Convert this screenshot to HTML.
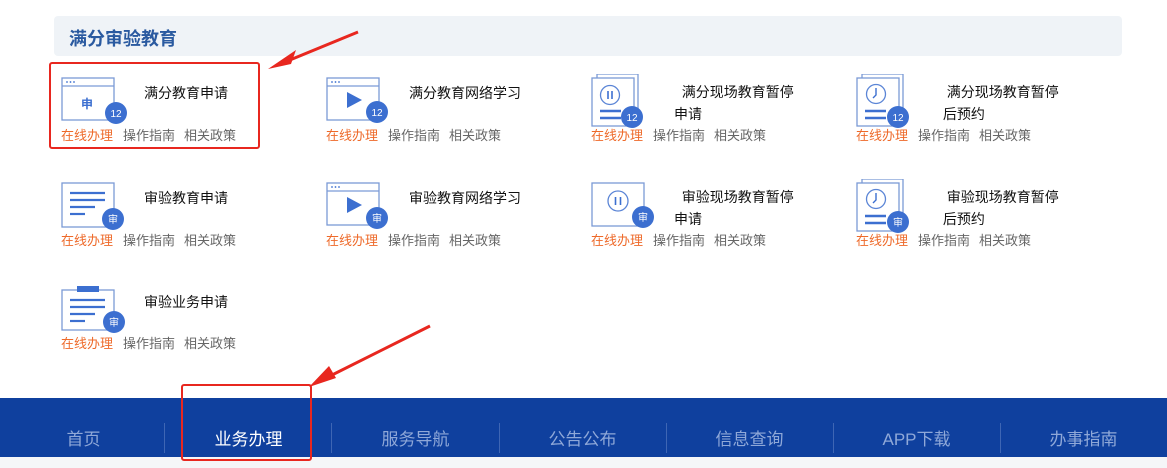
<!DOCTYPE html>
<html><head><meta charset="utf-8">
<style>
*{margin:0;padding:0;box-sizing:border-box}
body{width:1167px;height:468px;overflow:hidden;background:#fff;font-family:"Liberation Sans","Noto Sans CJK SC",sans-serif;position:relative}
.hdr{position:absolute;left:54px;top:16px;width:1068px;height:40px;background:#eff3f7;border-radius:4px}
.hdr span{position:absolute;left:15px;top:9px;font-size:18px;font-weight:bold;color:#2a5aa0}
.it{position:absolute;width:260px;height:90px}
.it svg{position:absolute;left:0;top:0}
.t{position:absolute;left:83px;top:5px;font-size:14px;color:#111;line-height:22px;width:150px}
.l{position:absolute;left:0;top:48px;font-size:13px;color:#666;white-space:nowrap}
.l b{font-weight:normal;color:#ee6a2a;margin-right:10px}
.l i{font-style:normal;margin-right:9px}
.nav{position:absolute;left:0;top:398px;width:1167px;height:59px;background:#0f409e}
.foot{position:absolute;left:0;top:457px;width:1167px;height:11px;background:#f5f6f8}
.nav div{position:absolute;top:27px;font-size:17px;color:#8fa8d8;width:167px;text-align:center}
.sep{position:absolute;top:25px;width:1px;height:30px;background:#3e66b4}
.box{position:absolute;border:2px solid #e8271f;border-radius:3px}
</style></head><body>
<div class="hdr"><span>满分审验教育</span></div>

<svg width="0" height="0" style="position:absolute">
<defs>
<g id="win"><rect x="1" y="1" width="52" height="42" fill="#fff" stroke="#7b9ad6" stroke-width="1.3"/><line x1="1" y1="9" x2="53" y2="9" stroke="#7b9ad6" stroke-width="1.3"/><circle cx="6" cy="5" r="0.9" fill="#3c6fd0"/><circle cx="9.5" cy="5" r="0.9" fill="#3c6fd0"/><circle cx="13" cy="5" r="0.9" fill="#3c6fd0"/></g>
<g id="stk"><rect x="6" y="-3" width="41" height="44" fill="#fff" stroke="#7b9ad6" stroke-width="1.3"/><rect x="1" y="1" width="42" height="48" fill="#fff" stroke="#7b9ad6" stroke-width="1.3"/><line x1="9" y1="34" x2="30" y2="34" stroke="#3c6fd0" stroke-width="2.5"/><line x1="9" y1="41" x2="30" y2="41" stroke="#3c6fd0" stroke-width="2.5"/></g>
<g id="doc"><rect x="1" y="1" width="52" height="44" fill="#fff" stroke="#7b9ad6" stroke-width="1.3"/><line x1="9" y1="11" x2="44" y2="11" stroke="#3c6fd0" stroke-width="2.2"/><line x1="9" y1="18" x2="44" y2="18" stroke="#3c6fd0" stroke-width="2.2"/><line x1="9" y1="25" x2="34" y2="25" stroke="#3c6fd0" stroke-width="2.2"/><line x1="9" y1="32" x2="24" y2="32" stroke="#3c6fd0" stroke-width="2.2"/></g>
</defs></svg>

<!-- row 1 -->
<div class="it" style="left:61px;top:77px">
<svg width="80" height="56"><use href="#win"/><text x="26" y="31" font-size="12" font-weight="bold" fill="#3c6fd0" text-anchor="middle" font-family="Noto Sans CJK SC">申</text><circle cx="55" cy="36" r="11" fill="#3c6fd0"/><text x="55" y="40" font-size="10" fill="#fff" text-anchor="middle">12</text></svg>
<div class="t">满分教育申请</div>
<div class="l"><b>在线办理</b><i>操作指南</i><i>相关政策</i></div></div>

<div class="it" style="left:326px;top:77px">
<svg width="80" height="56"><use href="#win"/><polygon points="21,15 21,31 36,23" fill="#3c6fd0"/><circle cx="51" cy="35" r="11" fill="#3c6fd0"/><text x="51" y="39" font-size="10" fill="#fff" text-anchor="middle">12</text></svg>
<div class="t">满分教育网络学习</div>
<div class="l"><b>在线办理</b><i>操作指南</i><i>相关政策</i></div></div>

<div class="it" style="left:591px;top:77px">
<svg width="80" height="56" style="top:-3px" viewBox="0 -3 80 56"><use href="#stk"/><circle cx="19" cy="18" r="9.5" fill="none" stroke="#5b85d6" stroke-width="1.3"/><line x1="17" y1="14" x2="17" y2="22" stroke="#3c6fd0" stroke-width="1.6"/><line x1="21" y1="14" x2="21" y2="22" stroke="#3c6fd0" stroke-width="1.6"/><circle cx="41" cy="40" r="11" fill="#3c6fd0"/><text x="41" y="44" font-size="10" fill="#fff" text-anchor="middle">12</text></svg>
<div class="t" style="top:4px">&nbsp;&nbsp;满分现场教育暂停<br>申请</div>
<div class="l"><b>在线办理</b><i>操作指南</i><i>相关政策</i></div></div>

<div class="it" style="left:856px;top:77px">
<svg width="80" height="56" style="top:-3px" viewBox="0 -3 80 56"><use href="#stk"/><circle cx="20" cy="17" r="9.5" fill="none" stroke="#5b85d6" stroke-width="1.3"/><polyline points="20,11 20,18 17,21" fill="none" stroke="#3c6fd0" stroke-width="1.4"/><circle cx="42" cy="40" r="11" fill="#3c6fd0"/><text x="42" y="44" font-size="10" fill="#fff" text-anchor="middle">12</text></svg>
<div class="t" style="top:4px">&nbsp;&nbsp;满分现场教育暂停<br>&nbsp;后预约</div>
<div class="l"><b>在线办理</b><i>操作指南</i><i>相关政策</i></div></div>

<!-- row 2 -->
<div class="it" style="left:61px;top:182px">
<svg width="80" height="56"><use href="#doc"/><circle cx="52" cy="37" r="11" fill="#3c6fd0"/><text x="52" y="41" font-size="10" fill="#fff" text-anchor="middle" font-family="Noto Sans CJK SC">审</text></svg>
<div class="t">审验教育申请</div>
<div class="l"><b>在线办理</b><i>操作指南</i><i>相关政策</i></div></div>

<div class="it" style="left:326px;top:182px">
<svg width="80" height="56"><use href="#win"/><polygon points="21,15 21,31 36,23" fill="#3c6fd0"/><circle cx="51" cy="36" r="11" fill="#3c6fd0"/><text x="51" y="40" font-size="10" fill="#fff" text-anchor="middle" font-family="Noto Sans CJK SC">审</text></svg>
<div class="t">审验教育网络学习</div>
<div class="l"><b>在线办理</b><i>操作指南</i><i>相关政策</i></div></div>

<div class="it" style="left:591px;top:182px">
<svg width="80" height="56"><rect x="1" y="1" width="52" height="43" fill="#fff" stroke="#7b9ad6" stroke-width="1.3"/><circle cx="27" cy="19" r="10" fill="none" stroke="#5b85d6" stroke-width="1.3"/><line x1="24.5" y1="15" x2="24.5" y2="23" stroke="#3c6fd0" stroke-width="1.6"/><line x1="29.5" y1="15" x2="29.5" y2="23" stroke="#3c6fd0" stroke-width="1.6"/><circle cx="52" cy="35" r="11" fill="#3c6fd0"/><text x="52" y="39" font-size="10" fill="#fff" text-anchor="middle" font-family="Noto Sans CJK SC">审</text></svg>
<div class="t" style="top:4px">&nbsp;&nbsp;审验现场教育暂停<br>申请</div>
<div class="l"><b>在线办理</b><i>操作指南</i><i>相关政策</i></div></div>

<div class="it" style="left:856px;top:182px">
<svg width="80" height="56" style="top:-3px" viewBox="0 -3 80 56"><use href="#stk"/><circle cx="20" cy="17" r="9.5" fill="none" stroke="#5b85d6" stroke-width="1.3"/><polyline points="20,11 20,18 17,21" fill="none" stroke="#3c6fd0" stroke-width="1.4"/><circle cx="42" cy="40" r="11" fill="#3c6fd0"/><text x="42" y="44" font-size="10" fill="#fff" text-anchor="middle" font-family="Noto Sans CJK SC">审</text></svg>
<div class="t" style="top:4px">&nbsp;&nbsp;审验现场教育暂停<br>&nbsp;后预约</div>
<div class="l"><b>在线办理</b><i>操作指南</i><i>相关政策</i></div></div>

<!-- row 3 -->
<div class="it" style="left:61px;top:286px">
<svg width="80" height="56"><rect x="1" y="4" width="52" height="40" fill="#fff" stroke="#7b9ad6" stroke-width="1.3"/><rect x="16" y="0" width="22" height="6" fill="#3c6fd0"/><line x1="9" y1="14" x2="44" y2="14" stroke="#3c6fd0" stroke-width="2.2"/><line x1="9" y1="21" x2="44" y2="21" stroke="#3c6fd0" stroke-width="2.2"/><line x1="9" y1="28" x2="34" y2="28" stroke="#3c6fd0" stroke-width="2.2"/><line x1="9" y1="35" x2="24" y2="35" stroke="#3c6fd0" stroke-width="2.2"/><circle cx="53" cy="36" r="11" fill="#3c6fd0"/><text x="53" y="40" font-size="10" fill="#fff" text-anchor="middle" font-family="Noto Sans CJK SC">审</text></svg>
<div class="t">审验业务申请</div>
<div class="l" style="top:47px"><b>在线办理</b><i>操作指南</i><i>相关政策</i></div></div>

<div class="nav">
<div style="left:0">首页</div><span class="sep" style="left:164px"></span>
<div style="left:165px;color:#fff">业务办理</div><span class="sep" style="left:331px"></span>
<div style="left:332px">服务导航</div><span class="sep" style="left:499px"></span>
<div style="left:499px">公告公布</div><span class="sep" style="left:666px"></span>
<div style="left:666px">信息查询</div><span class="sep" style="left:833px"></span>
<div style="left:833px">APP下载</div><span class="sep" style="left:1000px"></span>
<div style="left:1000px">办事指南</div>
</div>
<div class="foot"></div>

<div class="box" style="left:49px;top:62px;width:211px;height:87px"></div>
<div class="box" style="left:181px;top:384px;width:131px;height:77px"></div>

<svg width="1167" height="468" style="position:absolute;left:0;top:0;pointer-events:none">
<line x1="358" y1="32" x2="285" y2="62" stroke="#e8271f" stroke-width="3"/>
<polygon points="268,69 296,50 291,64" fill="#e8271f"/>
<line x1="430" y1="326" x2="322" y2="380" stroke="#e8271f" stroke-width="3"/>
<polygon points="309,387 329,366 336,378" fill="#e8271f"/>
</svg>
</body></html>
